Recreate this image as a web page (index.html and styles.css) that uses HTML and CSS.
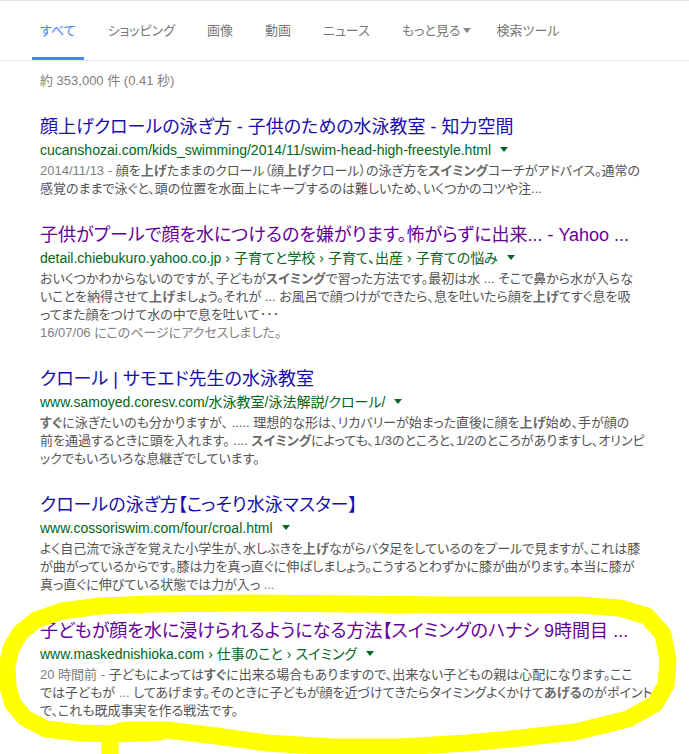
FILE: index.html
```html
<!DOCTYPE html>
<html lang="ja">
<head>
<meta charset="utf-8">
<title>検索結果</title>
<link rel="stylesheet" href="styles.css">
</head>
<body>
<div class="page">
  <nav class="tabs">
    <a class="tab active">すべて</a>
    <a class="tab">ショッピング</a>
    <a class="tab">画像</a>
    <a class="tab">動画</a>
    <a class="tab">ニュース</a>
    <a class="tab more">もっと見る<span class="caret"></span></a>
    <a class="tab">検索ツール</a>
  </nav>
  <div class="stats">約 353,000 件 (0.41 秒)</div>

  <div class="results">
    <div class="g">
      <h3 class="title"><a class="link">顔上げクロールの泳ぎ方 <span class="lat">-</span> 子供のための水泳教室 <span class="lat">-</span> 知力空間</a></h3>
      <div class="url">cucanshozai.com/kids_swimming/2014/11/swim-head-high-freestyle.html<span class="arrow"></span></div>
      <div class="st"><span class="date">2014/11/13 - </span>顔を<b>上げ</b>たままのクロール（顔<b>上げ</b>クロール）の泳ぎ方を<b>スイミング</b>コーチがアドバイス。通常の<br>感覚のままで泳ぐと、頭の位置を水面上にキープするのは難しいため、いくつかのコツや注...</div>
    </div>

    <div class="g">
      <h3 class="title"><a class="link visited">子供がプールで顔を水につけるのを嫌がります。怖がらずに出来<span class="lat">... - Yahoo ...</span></a></h3>
      <div class="url">detail.chiebukuro.yahoo.co.jp<span class="sep">›</span>子育てと学校<span class="sep">›</span>子育て、出産<span class="sep">›</span>子育ての悩み<span class="arrow"></span></div>
      <div class="st">おいくつかわからないのですが、子どもが<b>スイミング</b>で習った方法です。最初は水 <span class="lat">...</span> そこで鼻から水が入らな<br>いことを納得させて<b>上げ</b>ましょう。それが <span class="lat">...</span> お風呂で顔つけができたら、息を吐いたら顔を<b>上げ</b>てすぐ息を吸<br>ってまた顔をつけて水の中で息を吐いて･･･<br><span class="date">16/07/06 にこのページにアクセスしました。</span></div>
    </div>

    <div class="g">
      <h3 class="title"><a class="link">クロール <span class="lat">|</span> サモエド先生の水泳教室</a></h3>
      <div class="url">www.samoyed.coresv.com/水泳教室/泳法解説/クロール/<span class="arrow"></span></div>
      <div class="st"><b>すぐ</b>に泳ぎたいのも分かりますが、 <span class="lat">.....</span> 理想的な形は、リカバリーが始まった直後に顔を<b>上げ</b>始め、手が顔の<br>前を通過するときに頭を入れます。 <span class="lat">....</span> <b>スイミング</b>によっても、<span class="lat">1/3</span>のところと、<span class="lat">1/2</span>のところがありますし、オリンピ<br>ックでもいろいろな息継ぎでしています。</div>
    </div>

    <div class="g">
      <h3 class="title"><a class="link">クロールの泳ぎ方【こっそり水泳マスター】</a></h3>
      <div class="url">www.cossoriswim.com/four/croal.html<span class="arrow"></span></div>
      <div class="st">よく自己流で泳ぎを覚えた小学生が、水しぶきを<b>上げ</b>ながらバタ足をしているのをプールで見ますが、これは膝<br>が曲がっているからです。膝は力を真っ直ぐに伸ばしましょう。こうするとわずかに膝が曲がります。本当に膝が<br>真っ直ぐに伸びている状態では力が入っ <span class="lat ell">...</span></div>
    </div>

    <div class="g">
      <h3 class="title"><a class="link visited">子どもが顔を水に浸けられるようになる方法【スイミングのハナシ <span class="lat">9</span>時間目 <span class="lat">...</span></a></h3>
      <div class="url">www.maskednishioka.com<span class="sep">›</span>仕事のこと<span class="sep">›</span>スイミング<span class="arrow"></span></div>
      <div class="st"><span class="date"><span class="lat">20</span> 時間前 - </span>子どもによっては<b>すぐ</b>に出来る場合もありますので、出来ない子どもの親は心配になります。ここ<br>では子どもが <span class="lat ell">...</span> してあげます。そのときに子どもが顔を近づけてきたらタイミングよくかけて<b>あげる</b>のがポイント<br>で、これも既成事実を作る戦法です。</div>
    </div>
  </div>

  <svg class="highlight" width="689" height="754" viewBox="0 0 689 754" aria-hidden="true">
    <path d="M 110 758 L 110 740 Q 111 731 128 730 L 167 730 L 217 736 L 267 743 L 333 747 L 400 747 L 467 743 L 520 738 L 575 732 L 628 719 L 655 704 L 666 685 L 668 660 L 663 634 L 647 616 L 620 608 L 580 605 L 500 605 L 450 605 L 350 604 L 250 603 L 150 604 L 100 606 L 62 611 L 36 620 L 20 633 L 11 649 L 7 666 L 8 687 L 13 704 L 25 718 L 46 729 L 80 733 L 117 734 L 160 732" fill="none" stroke="#ffff00" stroke-width="17" stroke-linecap="round" stroke-linejoin="round"/>
  </svg>
</div>
</body>
</html>
```

FILE: styles.css
```css
html, body {
  margin: 0;
  padding: 0;
  background: #fff;
}

body {
  font-family: "Liberation Sans", Arial, "Noto Sans CJK JP", sans-serif;
  font-feature-settings: "palt";
  color: #545454;
  border-top: 1px solid #e5e5e5;
}

.page {
  position: relative;
  width: 689px;
  height: 753px;
  overflow: hidden;
}

.tabs {
  display: flex;
  gap: 16px;
  padding-left: 32px;
  height: 59px;
  border-bottom: 1px solid #ebebeb;
}

.tab {
  box-sizing: border-box;
  height: 59px;
  padding: 22px 8px 0;
  font-size: 13px;
  line-height: 16px;
  color: #777;
  border-bottom: 3px solid transparent;
  white-space: nowrap;
}

.tab.active {
  color: #4285f4;
  border-bottom-color: #4285f4;
}

.tab.more {
  padding-right: 2px;
}

.caret {
  display: inline-block;
  width: 0;
  height: 0;
  margin-left: 2px;
  vertical-align: 2px;
  border-top: 5px solid #888;
  border-left: 4px solid transparent;
  border-right: 4px solid transparent;
}

.stats {
  margin: 12px 0 0 40px;
  font-size: 13px;
  line-height: 16px;
  color: #808080;
}

.results {
  margin-top: 27px;
  padding-left: 40px;
}

.g {
  margin-bottom: 26px;
}

.title {
  margin: 0;
  font-size: 18px;
  font-weight: normal;
  line-height: 22px;
  white-space: nowrap;
}

.link {
  color: #1a0dab;
}

.link.visited {
  color: #660099;
}

.url {
  margin-top: 2px;
  font-size: 14px;
  line-height: 20px;
  color: #006621;
  white-space: nowrap;
}

.sep {
  margin: 0 4px;
  color: #006621;
}

.arrow {
  display: inline-block;
  width: 0;
  height: 0;
  margin-left: 9px;
  vertical-align: 3px;
  border-top: 5px solid #006621;
  border-left: 4px solid transparent;
  border-right: 4px solid transparent;
}

.st {
  margin-top: 2px;
  font-size: 13px;
  line-height: 18px;
  color: #545454;
  white-space: nowrap;
}

.st b {
  color: #6a6a6a;
  font-weight: bold;
}

.date {
  color: #808080;
}

.ell {
  color: #7a7a9a;
}

.highlight {
  position: absolute;
  left: 0;
  top: -1px;
  pointer-events: none;
}
```
